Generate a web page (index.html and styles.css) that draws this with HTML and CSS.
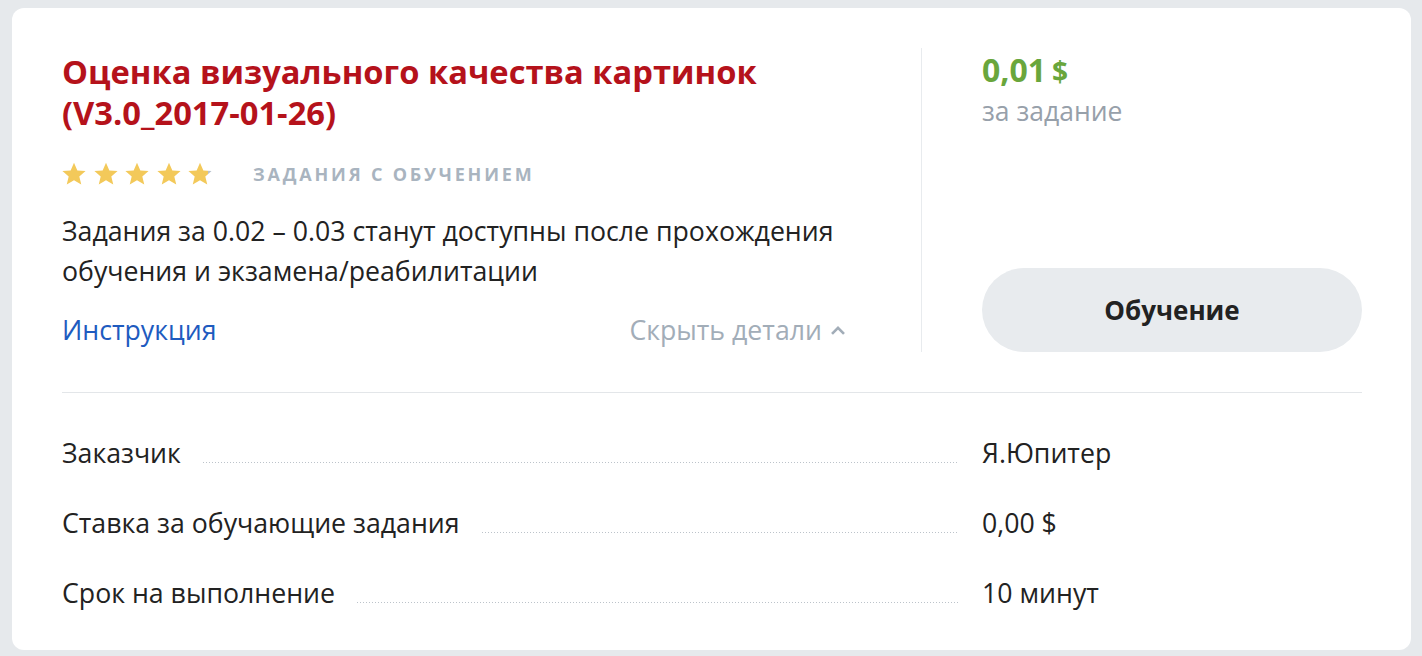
FILE: index.html
```html
<!DOCTYPE html>
<html lang="ru">
<head>
<meta charset="utf-8">
<link rel="stylesheet" href="styles.css">
</head>
<body>
<div class="card">
  <div class="top">
    <div class="main">
      <h1 class="title">Оценка визуального качества картинок (V3.0_2017-01-26)</h1>
      <div class="meta">
        <div class="stars">
          <svg viewBox="0 0 24 24" class="star"><path d="M12 1.5l3.1 7.2 7.6.6-5.8 5 1.8 7.5L12 17.8l-6.7 4 1.8-7.5-5.8-5 7.6-.6z"/></svg>
          <svg viewBox="0 0 24 24" class="star"><path d="M12 1.5l3.1 7.2 7.6.6-5.8 5 1.8 7.5L12 17.8l-6.7 4 1.8-7.5-5.8-5 7.6-.6z"/></svg>
          <svg viewBox="0 0 24 24" class="star"><path d="M12 1.5l3.1 7.2 7.6.6-5.8 5 1.8 7.5L12 17.8l-6.7 4 1.8-7.5-5.8-5 7.6-.6z"/></svg>
          <svg viewBox="0 0 24 24" class="star"><path d="M12 1.5l3.1 7.2 7.6.6-5.8 5 1.8 7.5L12 17.8l-6.7 4 1.8-7.5-5.8-5 7.6-.6z"/></svg>
          <svg viewBox="0 0 24 24" class="star"><defs><linearGradient id="g"><stop offset="85%" stop-color="#f3c95a"/><stop offset="85%" stop-color="#b7c1cc"/></linearGradient></defs><path fill="url(#g)" d="M12 1.5l3.1 7.2 7.6.6-5.8 5 1.8 7.5L12 17.8l-6.7 4 1.8-7.5-5.8-5 7.6-.6z"/></svg>
        </div>
        <span class="tag">Задания с обучением</span>
      </div>
      <p class="desc">Задания за 0.02 – 0.03 станут доступны после прохождения обучения и экзамена/реабилитации</p>
      <div class="links">
        <a class="instr">Инструкция</a>
        <span class="hide">Скрыть детали <svg class="chev" viewBox="0 0 12 8"><path d="M1.5 6.5L6 2l4.5 4.5" fill="none" stroke="currentColor" stroke-width="2"/></svg></span>
      </div>
    </div>
    <div class="side">
      <div class="price">0,01<span class="cur">$</span></div>
      <div class="per">за задание</div>
      <button class="btn">Обучение</button>
    </div>
  </div>
  <div class="rows">
    <div class="row"><span class="label">Заказчик</span><span class="dots"></span><span class="val">Я.Юпитер</span></div>
    <div class="row"><span class="label">Ставка за обучающие задания</span><span class="dots"></span><span class="val">0,00 $</span></div>
    <div class="row"><span class="label">Срок на выполнение</span><span class="dots"></span><span class="val">10 минут</span></div>
  </div>
</div>
</body>
</html>
```
FILE: styles.css
```css
html, body { margin: 0; padding: 0; }
body {
  background: #e6e9ec;
  font-family: "Open Sans", "Noto Sans", sans-serif;
  color: #222;
  padding: 8px 11px 6px 12px;
  height: 656px;
  box-sizing: border-box;
}
.card {
  background: #fff;
  border-radius: 12px;
  padding: 40px 49px 0 50px;
  height: 642px;
  box-sizing: border-box;
}
.top {
  display: flex;
  padding-bottom: 40px;
  border-bottom: 1px solid #e3e6e9;
}
.main {
  width: 859px;
  padding-bottom: 2px;
  border-right: 1px solid #e8ebee;
  margin-right: 60px;
}
.title {
  margin: 3px 0 0;
  max-width: 790px;
  font-size: 32.7px;
  line-height: 41px;
  font-weight: 700;
  color: #b5121b;
}
.meta {
  display: flex;
  align-items: center;
  margin-top: 26px;
  height: 30px;
}
.stars { display: flex; gap: 5.5px; margin-left: -1px; }
.star { width: 26px; height: 26px; fill: #f3c95a; }
.tag {
  margin-left: 40px;
  text-transform: uppercase;
  font-size: 18px;
  font-weight: 700;
  letter-spacing: 2.8px;
  color: #a9b4bf;
}
.desc {
  margin: 22px 0 0;
  max-width: 790px;
  font-size: 26.7px;
  line-height: 40px;
}
.links {
  display: flex;
  justify-content: space-between;
  align-items: center;
  margin-top: 19px;
  max-width: 784px;
  font-size: 26.7px;
  line-height: 40px;
}
.instr { color: #1e5bbf; }
.hide { color: #a2adb8; display: flex; align-items: center; gap: 8px; }
.chev { width: 16px; height: 11px; }
.side {
  flex: 1;
  display: flex;
  flex-direction: column;
}
.price {
  font-size: 32px;
  line-height: 44px;
  font-weight: 700;
  color: #69a63c;
}
.cur { font-size: 28px; margin-left: 6px; }
.per { font-size: 26.5px; color: #97a0aa; line-height: 36px; }
.btn {
  margin-top: auto;
  height: 84px;
  border: 0;
  border-radius: 42px;
  background: #e8ebee;
  font-family: inherit;
  font-size: 26px;
  font-weight: 700;
  color: #222;
}
.rows { padding-top: 25px; }
.row {
  display: flex;
  align-items: baseline;
  height: 70px;
  line-height: 70px;
  font-size: 26.7px;
}
.label { margin-right: 22px; }
.dots {
  flex-grow: 1;
  height: 1px;
  background: linear-gradient(to right, #bcc3ca 1px, transparent 1px) repeat-x left bottom / 3px 1px;
  margin-right: 24px;
}
.val { width: 380px; }
```
